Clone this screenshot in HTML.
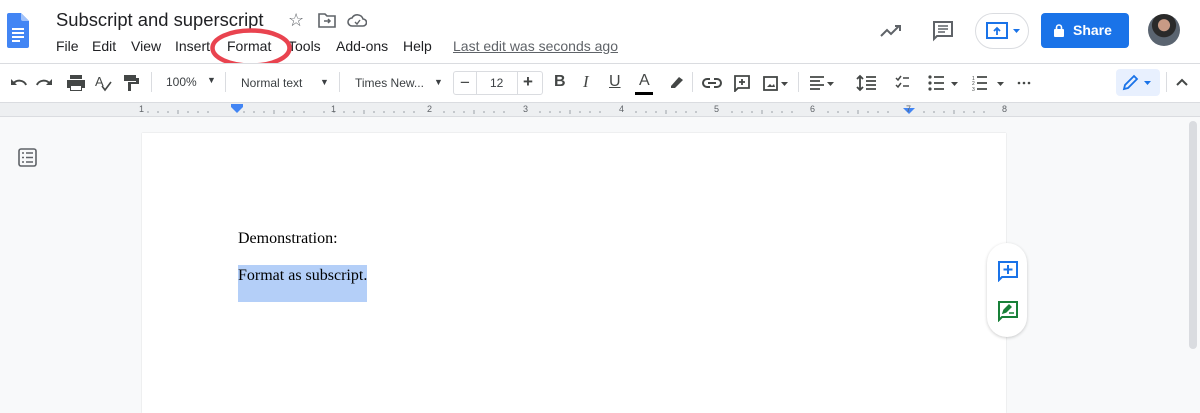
<!DOCTYPE html>
<html><head><meta charset="utf-8"><style>
*{margin:0;padding:0;box-sizing:border-box}
body{width:1200px;height:406px;overflow:hidden;background:#f8f9fa;font-family:"Liberation Sans",Arial,sans-serif;position:relative;color:#3c4043}
.a{position:absolute}
.top{left:0;top:0;width:1200px;height:63px;background:#fff}
.title{left:56px;top:9px;font-size:18.4px;color:#202124}
.menu{top:38px;font-size:14px;color:#202124}
.tb{left:0;top:63px;width:1200px;height:40px;background:#fff;border-top:1px solid #dadce0;border-bottom:1px solid #dadce0}
.ruler{left:0;top:103px;width:1200px;height:14px;background:#edeff1;border-bottom:1px solid #dadce0}
.tt{font-size:12px;color:#3c4043;top:11px}
.sep{top:9px;width:1px;height:20px;background:#dadce0}
.rn{top:104px;font-size:9px;color:#5f6368}
</style></head><body>
<div class="a top"></div>
<svg class="a" style="left:7px;top:13px" width="22" height="35" viewBox="0 0 22 35"><path d="M2 0h12l8 8v25a2 2 0 0 1-2 2H2a2 2 0 0 1-2-2V2a2 2 0 0 1 2-2z" fill="#4285f4"/><path d="M14 0v6a2 2 0 0 0 2 2h6z" fill="#a1c2fa"/><rect x="5" y="15" width="12" height="2" fill="#fff"/><rect x="5" y="19" width="12" height="2" fill="#fff"/><rect x="5" y="23" width="12" height="2" fill="#fff"/><rect x="5" y="27" width="8" height="2" fill="#fff"/></svg>
<div class="a title">Subscript and superscript</div>
<div class="a" style="left:288px;top:10px;font-size:18px;color:#5f6368">☆</div>
<svg class="a" style="left:318px;top:12px" width="18" height="16" viewBox="0 0 18 16"><path d="M1 2h6l2 2h8v11H1z" fill="none" stroke="#5f6368" stroke-width="1.6"/><path d="M6 9h6M10 7l2 2-2 2" stroke="#5f6368" stroke-width="1.5" fill="none"/></svg>
<svg class="a" style="left:347px;top:13px" width="20" height="14" viewBox="0 0 20 14"><path d="M5 13a4 4 0 0 1 0-8 6 6 0 0 1 11 1 3.5 3.5 0 0 1 0 7z" fill="none" stroke="#5f6368" stroke-width="1.6"/><path d="M8 9l2 2 3-4" stroke="#5f6368" stroke-width="1.4" fill="none"/></svg>
<div class="a menu" style="left:56px">File</div>
<div class="a menu" style="left:92px">Edit</div>
<div class="a menu" style="left:131px">View</div>
<div class="a menu" style="left:175px">Insert</div>
<div class="a menu" style="left:227px">Format</div>
<div class="a menu" style="left:288px">Tools</div>
<div class="a menu" style="left:336px">Add-ons</div>
<div class="a menu" style="left:403px">Help</div>
<div class="a menu" style="left:453px;color:#5f6368;text-decoration:underline">Last edit was seconds ago</div>
<svg class="a" style="left:209px;top:27px" width="84" height="42"><ellipse cx="42" cy="21" rx="38.5" ry="17.5" fill="none" stroke="#e9434f" stroke-width="4.5"/></svg>
<svg class="a" style="left:880px;top:22px" width="22" height="16" viewBox="0 0 22 16"><path d="M1 14l6-6 4 4 8-8M15 4h5v5" fill="none" stroke="#5f6368" stroke-width="2"/></svg>
<svg class="a" style="left:932px;top:20px" width="22" height="22" viewBox="0 0 22 22"><path d="M2 2h18v14H5l-3 3z" fill="none" stroke="#5f6368" stroke-width="2"/><path d="M6 6h10M6 9h10M6 12h7" stroke="#5f6368" stroke-width="1.6"/></svg>
<div class="a" style="left:975px;top:13px;width:54px;height:36px;border:1px solid #dadce0;border-radius:18px;background:#fff"></div>
<svg class="a" style="left:986px;top:21px" width="36" height="20" viewBox="0 0 36 20"><rect x="1" y="2" width="20" height="15" fill="none" stroke="#1a73e8" stroke-width="2"/><path d="M11 14V7M8 10l3-3 3 3" stroke="#1a73e8" stroke-width="1.8" fill="none"/><path d="M27 8h7l-3.5 4z" fill="#1a73e8"/></svg>
<div class="a" style="left:1041px;top:13px;width:88px;height:35px;background:#1a73e8;border-radius:4px;color:#fff;font-size:14px;font-weight:bold;line-height:35px;padding-left:32px">Share</div>
<svg class="a" style="left:1054px;top:24px" width="10" height="13" viewBox="0 0 10 13"><rect x="0" y="5" width="10" height="8" rx="1" fill="#fff"/><path d="M2.5 5V3.5a2.5 2.5 0 0 1 5 0V5" stroke="#fff" stroke-width="1.6" fill="none"/></svg>
<div class="a" style="left:1148px;top:14px;width:32px;height:32px;border-radius:50%;background:radial-gradient(circle at 50% 35%,#c89a85 0 22%,#2a2a2a 24% 45%,#5a6470 47%)"></div>

<div class="a tb"></div>
<svg class="a" style="left:10px;top:74px" width="135" height="18" viewBox="0 0 135 18">
<path d="M3 10a7 6 0 0 1 13 1" fill="none" stroke="#444746" stroke-width="2"/><path d="M1 5v6h6z" fill="#444746"/>
<path d="M40 10a7 6 0 0 0-13 1" fill="none" stroke="#444746" stroke-width="2"/><path d="M42 5v6h-6z" fill="#444746"/>
<path d="M60 5h12v-4h-12z M57 6h18v8h-3v3h-12v-3h-3z" fill="#444746"/><rect x="61" y="12" width="10" height="4" fill="#fff"/>
<text x="85" y="12" font-size="13" fill="#444746" font-family="Liberation Sans">A</text><path d="M92 12l3 4 6-8" fill="none" stroke="#444746" stroke-width="1.6"/>
<path d="M114 1h12v6h-12zM126 4h3v6h-8v7h-3v-9h8z" fill="#444746"/></svg>
<div class="a sep" style="left:151px;top:72px"></div>
<div class="a tt" style="left:166px;top:75px">100%</div><div class="a tt" style="left:207px;top:75px;font-size:9px">▼</div>
<div class="a sep" style="left:225px;top:72px"></div>
<div class="a tt" style="left:241px;top:76px">Normal text</div><div class="a tt" style="left:320px;top:77px;font-size:9px">▼</div>
<div class="a sep" style="left:339px;top:72px"></div>
<div class="a tt" style="left:355px;top:76px">Times New...</div><div class="a tt" style="left:434px;top:77px;font-size:9px">▼</div>
<div class="a" style="left:453px;top:71px;width:90px;height:24px;border:1px solid #dadce0;border-radius:3px"></div>
<div class="a" style="left:476px;top:71px;width:1px;height:24px;background:#dadce0"></div>
<div class="a" style="left:517px;top:71px;width:1px;height:24px;background:#dadce0"></div>
<div class="a" style="left:460px;top:73px;font-size:17px;color:#444746">−</div>
<div class="a tt" style="left:490px;top:76px">12</div>
<div class="a" style="left:523px;top:72px;font-size:17px;color:#444746;font-weight:bold">+</div>
<div class="a" style="left:554px;top:73px;font-size:16px;font-weight:bold;color:#444746">B</div>
<div class="a" style="left:583px;top:72px;font-size:17px;font-style:italic;font-family:'Liberation Serif';color:#444746">I</div>
<div class="a" style="left:609px;top:73px;font-size:16px;text-decoration:underline;color:#444746">U</div>
<div class="a" style="left:639px;top:72px;font-size:16px;color:#444746">A</div>
<div class="a" style="left:635px;top:92px;width:18px;height:3px;background:#000"></div>
<svg class="a" style="left:668px;top:74px" width="18" height="16" viewBox="0 0 18 16"><path d="M3 12l8-9 4 3-8 8H3z" fill="#444746"/></svg>
<div class="a sep" style="left:692px;top:72px"></div>
<svg class="a" style="left:702px;top:74px" width="100" height="18" viewBox="0 0 100 18">
<path d="M8 5H5a4 4 0 0 0 0 8h3M12 5h3a4 4 0 0 1 0 8h-3M6 9h8" fill="none" stroke="#444746" stroke-width="2"/>
<path d="M33 2h14v12H36l-3 3z" fill="none" stroke="#444746" stroke-width="1.8"/><path d="M40 5v6M37 8h6" stroke="#444746" stroke-width="1.8"/>
<rect x="62" y="3" width="13" height="13" fill="none" stroke="#444746" stroke-width="1.8"/><path d="M65 13l3-3 2 2 2-2 1 3z" fill="#444746"/><path d="M79 8h7l-3.5 4z" fill="#444746"/></svg>
<div class="a sep" style="left:798px;top:72px"></div>
<svg class="a" style="left:808px;top:74px" width="230" height="18" viewBox="0 0 230 18">
<path d="M2 3h14M2 7h10M2 11h14M2 15h10" stroke="#444746" stroke-width="1.8"/><path d="M19 8h7l-3.5 4z" fill="#444746"/>
<path d="M52 2v14M49 5l3-3 3 3M49 13l3 3 3-3M58 3h10M58 7h10M58 11h10M58 15h10" fill="none" stroke="#444746" stroke-width="1.8"/>
<path d="M88 4l2 2 3-4M88 11l2 2 3-4M95 4h6M95 12h6" fill="none" stroke="#444746" stroke-width="1.5"/>
<circle cx="122" cy="3" r="1.6" fill="#444746"/><circle cx="122" cy="9" r="1.6" fill="#444746"/><circle cx="122" cy="15" r="1.6" fill="#444746"/><path d="M126 3h10M126 9h10M126 15h10" stroke="#444746" stroke-width="1.8"/><path d="M143 8h7l-3.5 4z" fill="#444746"/>
<text x="164" y="6" font-size="5" fill="#444746">1</text><text x="164" y="11" font-size="5" fill="#444746">2</text><text x="164" y="17" font-size="5" fill="#444746">3</text><path d="M169 3h10M169 9h10M169 15h10" stroke="#444746" stroke-width="1.8"/><path d="M189 8h7l-3.5 4z" fill="#444746"/>
<circle cx="211" cy="9" r="1.3" fill="#444746"/><circle cx="216" cy="9" r="1.3" fill="#444746"/><circle cx="221" cy="9" r="1.3" fill="#444746"/></svg>
<div class="a" style="left:1116px;top:69px;width:44px;height:27px;background:#e8f0fe;border-radius:4px"></div>
<svg class="a" style="left:1122px;top:74px" width="34" height="17" viewBox="0 0 34 17"><path d="M2 15l1-4 9-9 3 3-9 9z" fill="none" stroke="#1a73e8" stroke-width="1.8"/><path d="M22 7h7l-3.5 4z" fill="#1a73e8"/></svg>
<div class="a sep" style="left:1166px;top:72px"></div>
<svg class="a" style="left:1175px;top:77px" width="14" height="10" viewBox="0 0 14 10"><path d="M2 8l5-5 5 5" fill="none" stroke="#444746" stroke-width="2"/></svg>

<div class="a ruler"></div>
<svg class="a" style="left:0;top:103px" width="1200" height="14">
<g stroke="#9aa0a6" stroke-width="1">
<path d="M148 8v2M158 8v2M168 8v2M178 7v4M188 8v2M198 8v2M208 8v2M244 8v2M254 8v2M264 8v2M274 7v4M284 8v2M294 8v2M304 8v2M324 8v2M334 8v2M344 8v2M354 8v2M364 7v4M374 8v2M384 8v2M394 8v2M404 8v2M414 8v2M444 8v2M454 8v2M464 8v2M474 7v4M484 8v2M494 8v2M504 8v2M540 8v2M550 8v2M560 8v2M570 7v4M580 8v2M590 8v2M600 8v2M636 8v2M646 8v2M656 8v2M666 7v4M676 8v2M686 8v2M696 8v2M732 8v2M742 8v2M752 8v2M762 7v4M772 8v2M782 8v2M792 8v2M828 8v2M838 8v2M848 8v2M858 7v4M868 8v2M878 8v2M888 8v2M924 8v2M934 8v2M944 8v2M954 7v4M964 8v2M974 8v2M984 8v2"/></g>
<path d="M231 1h12v3l-6 6-6-6z" fill="#4285f4"/><path d="M903 5h12l-6 6z" fill="#4285f4"/></svg>
<div class="a rn" style="left:139px">1</div><div class="a rn" style="left:331px">1</div><div class="a rn" style="left:427px">2</div><div class="a rn" style="left:523px">3</div><div class="a rn" style="left:619px">4</div><div class="a rn" style="left:714px">5</div><div class="a rn" style="left:810px">6</div><div class="a rn" style="left:906px">7</div><div class="a rn" style="left:1002px">8</div>

<svg class="a" style="left:18px;top:148px" width="19" height="19" viewBox="0 0 19 19"><rect x="1" y="1" width="17" height="17" rx="2" fill="none" stroke="#5f6368" stroke-width="1.6"/><path d="M4 5h2M8 5h7M4 9.5h2M8 9.5h7M4 14h2M8 14h7" stroke="#5f6368" stroke-width="1.6"/></svg>
<div class="a" style="left:142px;top:133px;width:864px;height:280px;background:#fff;box-shadow:0 0 1px #c8c8c8"></div>
<div class="a" style="left:238px;top:265px;width:129px;height:37px;background:#b4cff8"></div>
<div class="a" style="left:238px;top:230px;font-family:'Liberation Serif',serif;font-size:16px;color:#000">Demonstration:</div>
<div class="a" style="left:238px;top:267px;font-family:'Liberation Serif',serif;font-size:16px;color:#000">Format as subscript.</div>
<div class="a" style="left:987px;top:243px;width:40px;height:94px;background:#fff;border-radius:20px;box-shadow:0 1px 3px rgba(0,0,0,.2)"></div>
<svg class="a" style="left:997px;top:260px" width="22" height="22" viewBox="0 0 22 22"><path d="M2 2h18v15H5l-3 3z" fill="none" stroke="#1a73e8" stroke-width="2"/><path d="M11 5v9M6.5 9.5h9" stroke="#1a73e8" stroke-width="2"/></svg>
<svg class="a" style="left:997px;top:300px" width="22" height="22" viewBox="0 0 22 22"><path d="M2 2h18v15H5l-3 3z" fill="none" stroke="#188038" stroke-width="2"/><path d="M6 13l1-3 5-5 2 2-5 5zM12 13h5" fill="#188038" stroke="#188038" stroke-width="1.4"/></svg>
<div class="a" style="left:1189px;top:121px;width:8px;height:228px;background:#dadce0;border-radius:4px"></div>
</body></html>
